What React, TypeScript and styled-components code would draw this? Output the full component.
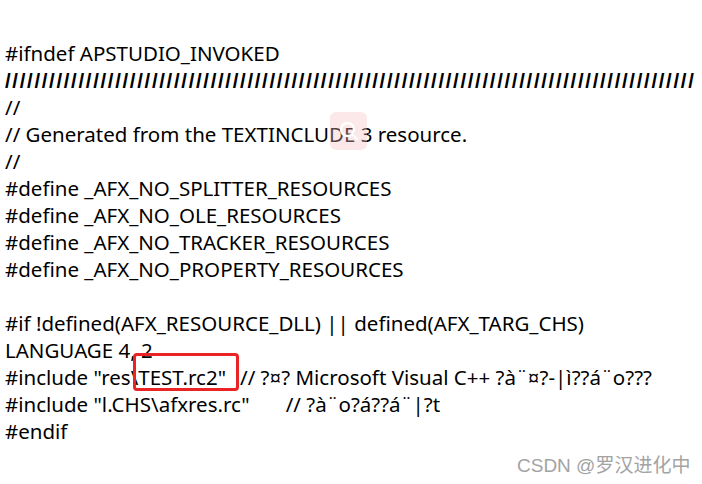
import React from "react";
import styled, { createGlobalStyle } from "styled-components";

const Global = createGlobalStyle`
  html, body { margin: 0; padding: 0; background: #ffffff; }
  body { width: 702px; height: 484px; overflow: hidden; }
`;

const Page = styled.div`
  position: relative;
  width: 702px;
  height: 484px;
  box-sizing: border-box;
  padding: 40px 0 0 5px;
  font-family: "Noto Sans", "Noto Sans CJK SC", sans-serif;
  font-size: 20.5px;
  color: #000;
  overflow: hidden;
`;

const Line = styled.div`
  height: 27px;
  line-height: 27px;
  white-space: pre;
`;

const RuleLine = styled(Line)`
  font-family: "Liberation Sans", sans-serif;
  font-weight: 700;
  letter-spacing: 1.65px;
  overflow: hidden;
`;

const Gap = styled.span<{ $w: number }>`
  display: inline-block;
  width: ${(p) => p.$w}px;
`;

const Boxed = styled.span`
  position: relative;
  &::after {
    content: "";
    position: absolute;
    left: -5px;
    right: -13px;
    top: -10px;
    bottom: 0;
    border: 3px solid #ea2424;
    border-radius: 4px;
  }
`;

const SearchBadge = styled.div`
  position: absolute;
  left: 330px;
  top: 112px;
  width: 37px;
  height: 38px;
  border-radius: 6px;
  background: rgba(246, 190, 190, 0.35);
  display: flex;
  align-items: center;
  justify-content: center;
`;

const Watermark = styled.div`
  position: absolute;
  left: 517px;
  top: 454px;
  font-family: "Liberation Sans", "Noto Sans CJK SC", sans-serif;
  font-size: 19px;
  line-height: 24px;
  color: #a3a3a3;
  white-space: nowrap;
`;

const slashes = "/".repeat(94);

export default function App() {
  return (
    <>
      <Global />
      <Page>
        <Line>#ifndef APSTUDIO_INVOKED</Line>
        <RuleLine>{slashes}</RuleLine>
        <Line>//</Line>
        <Line>// Generated from the TEXTINCLUDE 3 resource.</Line>
        <Line>//</Line>
        <Line>#define _AFX_NO_SPLITTER_RESOURCES</Line>
        <Line>#define _AFX_NO_OLE_RESOURCES</Line>
        <Line>#define _AFX_NO_TRACKER_RESOURCES</Line>
        <Line>#define _AFX_NO_PROPERTY_RESOURCES</Line>
        <Line> </Line>
        <Line>#if !defined(AFX_RESOURCE_DLL) || defined(AFX_TARG_CHS)</Line>
        <Line>LANGUAGE 4, 2</Line>
        <Line>
          #include "res\<Boxed>TEST.rc2"</Boxed>
          <Gap $w={14} />
          // ?¤? Microsoft Visual C++ ?à¨¤?-|ì??á¨o???
        </Line>
        <Line>
          #include "l.CHS\afxres.rc"
          <Gap $w={36} />
          // ?à¨o?á??á¨|?t
        </Line>
        <Line>#endif</Line>
        <SearchBadge>
          <svg width="24" height="24" viewBox="0 0 24 24" fill="none" stroke="#ffffff" strokeWidth="2.4" strokeLinecap="round">
            <circle cx="10.5" cy="10.5" r="6.5" />
            <path d="M15.5 15.5 L20 20" />
          </svg>
        </SearchBadge>
        <Watermark>CSDN @罗汉进化中</Watermark>
      </Page>
    </>
  );
}
